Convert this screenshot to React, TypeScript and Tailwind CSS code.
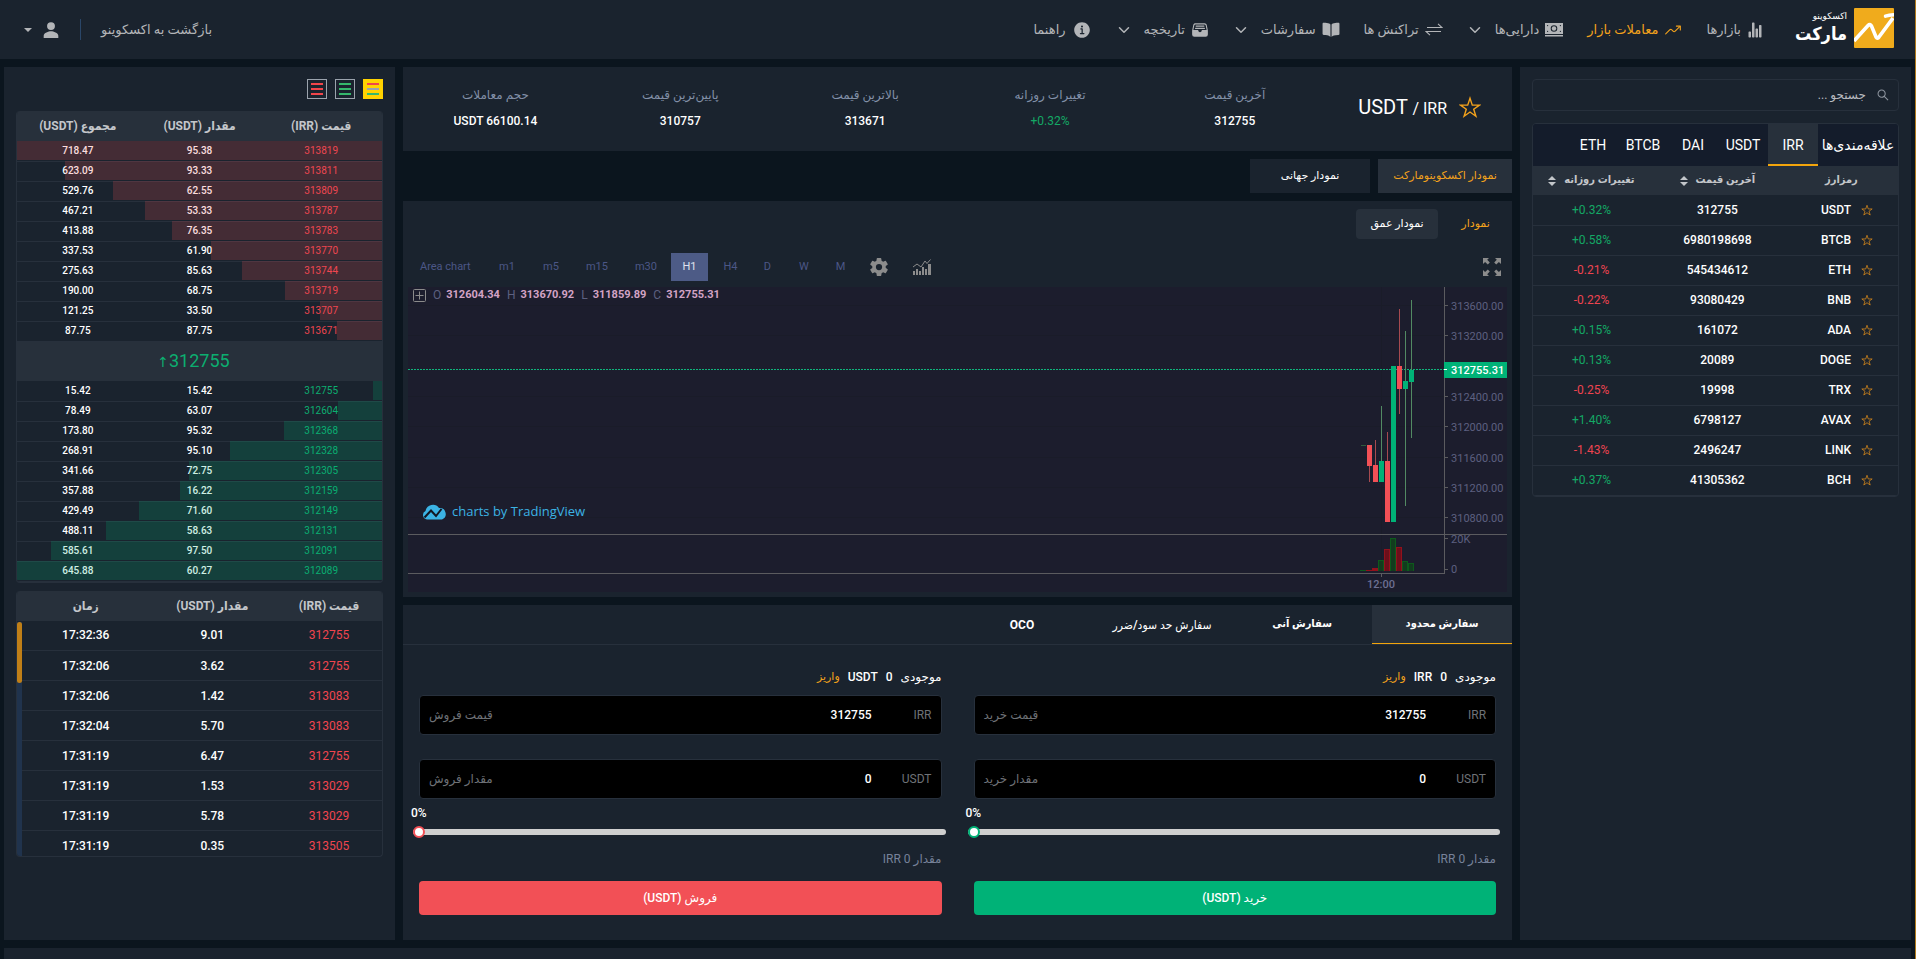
import type { ReactNode } from "react";
import clsx from "clsx";
import { AiOutlineSearch } from "react-icons/ai";
import {
    IoBook,
    IoChevronDown,
    IoFileTrayFull,
    IoInformationCircle,
    IoPersonSharp,
    IoSettingsSharp,
    IoStatsChart,
    IoTrendingUp,
} from "react-icons/io5";

function StarIcon({ className }: { className?: string }) {
    return (
        <svg viewBox="0 0 22 21" className={className} fill="none" stroke="currentColor" strokeWidth="1.4">
            <path d="M11 1.800l2.300 6.800h7.200l-5.800 4.200 2.200 6.900-5.900-4.200-5.900 4.200 2.200-6.900L1.500 8.600h7.200z" />
        </svg>
    );
}

function CashIcon() {
    return (
        <svg viewBox="0 0 18 14" className="h-3.5 w-[18px]" fill="currentColor">
            <path fillRule="evenodd" d="M0 0h18v11H0zM9 2.200a3.300 3.300 0 1 0 0 6.600 3.300 3.300 0 0 0 0-6.600zM2 2v1.500L3.500 2zM16 2v1.500L14.500 2zM2 9V7.500L3.500 9zM16 9V7.500L14.500 9z" />
            <circle cx="9" cy="5.500" r="2.200" />
            <path d="M0 12h18v1.500H0z" />
        </svg>
    );
}

function SwapIcon() {
    return (
        <svg viewBox="0 0 18 13" className="h-[13px] w-[18px]" fill="none" stroke="currentColor" strokeWidth="1.100">
            <path d="M2 4.500h15L13 .8M16 8.500H1l4 3.700" />
        </svg>
    );
}

type NavEntry = { label: string; icon: ReactNode; active?: boolean; menu?: boolean };

const navEntries: NavEntry[] = [
    { label: "بازارها", icon: <IoStatsChart className="size-4" /> },
    { label: "معاملات بازار", icon: <IoTrendingUp className="size-[18px]" />, active: true },
    { label: "دارایی‌ها", icon: <CashIcon />, menu: true },
    { label: "تراکنش ها", icon: <SwapIcon /> },
    { label: "سفارشات", icon: <IoBook className="size-[18px]" />, menu: true },
    { label: "تاریخچه", icon: <IoFileTrayFull className="size-[18px]" />, menu: true },
    { label: "راهنما", icon: <IoInformationCircle className="size-5" /> },
];

const stats = [
    { label: "آخرین قیمت", value: "312755" },
    { label: "تغییرات روزانه", value: "+0.32%", up: true },
    { label: "بالاترین قیمت", value: "313671" },
    { label: "پایین‌ترین قیمت", value: "310757" },
    { label: "حجم معاملات", value: "USDT 66100.14" },
];

const coins = [
    ["USDT", "312755", "+0.32%"],
    ["BTCB", "6980198698", "+0.58%"],
    ["ETH", "545434612", "-0.21%"],
    ["BNB", "93080429", "-0.22%"],
    ["ADA", "161072", "+0.15%"],
    ["DOGE", "20089", "+0.13%"],
    ["TRX", "19998", "-0.25%"],
    ["AVAX", "6798127", "+1.40%"],
    ["LINK", "2496247", "-1.43%"],
    ["BCH", "41305362", "+0.37%"],
];

const asks = [
    ["313819", "95.38", "718.47"],
    ["313811", "93.33", "623.09"],
    ["313809", "62.55", "529.76"],
    ["313787", "53.33", "467.21"],
    ["313783", "76.35", "413.88"],
    ["313770", "61.90", "337.53"],
    ["313744", "85.63", "275.63"],
    ["313719", "68.75", "190.00"],
    ["313707", "33.50", "121.25"],
    ["313671", "87.75", "87.75"],
];

const bids = [
    ["312755", "15.42", "15.42"],
    ["312604", "63.07", "78.49"],
    ["312368", "95.32", "173.80"],
    ["312328", "95.10", "268.91"],
    ["312305", "72.75", "341.66"],
    ["312159", "16.22", "357.88"],
    ["312149", "71.60", "429.49"],
    ["312131", "58.63", "488.11"],
    ["312091", "97.50", "585.61"],
    ["312089", "60.27", "645.88"],
];

const trades = [
    ["312755", "9.01", "17:32:36"],
    ["312755", "3.62", "17:32:06"],
    ["313083", "1.42", "17:32:06"],
    ["313083", "5.70", "17:32:04"],
    ["312755", "6.47", "17:31:19"],
    ["313029", "1.53", "17:31:19"],
    ["313029", "5.78", "17:31:19"],
    ["313505", "0.35", "17:31:19"],
];

function Logo() {
    return (
        <a href="#" className="flex items-center gap-[7px] text-white" aria-label="اکسکوینو مارکت">
            <svg viewBox="0 0 40 40" className="size-10">
                <rect width="40" height="40" rx="1" fill="#f0ab1c" />
                <path d="M0 33 L14 17.5 Q16 15.5 17.5 18 L22 29 Q23.5 31.5 25 29 L39 10" fill="none" stroke="#fff" strokeWidth="3.6" />
                <path d="M31.5 8.2 Q35 7 39.5 6.8" fill="none" stroke="#fff" strokeWidth="3.4" strokeLinecap="round" />
            </svg>
            <span className="flex flex-col">
                <span className="text-[9px] leading-3">اکسکوینو</span>
                <span className="font-['DejaVu_Sans_Condensed','DejaVu_Sans',sans-serif] text-lg leading-6 font-bold">مارکت</span>
            </span>
        </a>
    );
}

function Header() {
    return (
        <header className="flex h-[59px] items-center bg-[#1a232e] pb-1 pe-6 ps-[21px] text-[13px] text-[#b3b5b8]">
            <Logo />
            <nav className="ms-8 flex items-center gap-6 pt-1">
                {navEntries.map((entry) => (
                    <a key={entry.label} href="#" className={clsx("flex items-center", entry.active && "text-[#f3a21c]")}>
                        {entry.icon}
                        <span className="ms-1.5">{entry.label}</span>
                        {entry.menu && <IoChevronDown className="ms-3 size-4" />}
                    </a>
                ))}
            </nav>
            <a href="#" className="ms-auto pt-1">بازگشت به اکسکوینو</a>
            <span className="ms-5 mt-1 h-[21px] w-px bg-[#2a4668]" />
            <button className="ms-5 flex items-center gap-2.5 pt-1" aria-label="حساب کاربری">
                <IoPersonSharp className="size-[18px]" />
                <svg viewBox="0 0 8 4" className="h-1 w-2" fill="currentColor">
                    <path d="M0 0h8L4 4z" />
                </svg>
            </button>
        </header>
    );
}

function Sorter() {
    return (
        <svg viewBox="0 0 8 10" className="h-2.5 w-2" fill="#c3c6ca">
            <path d="M4 0l4 4H0zM4 10l4-4H0z" />
        </svg>
    );
}

function MarketsPanel() {
    return (
        <aside className="bg-[#1a232e] p-3">
            <label className="flex h-8 items-center gap-2.5 rounded border border-[#27303c] px-2">
                <AiOutlineSearch className="size-3.5 text-[#8d949e]" />
                <input
                    aria-label="جستجو"
                    placeholder="جستجو ..."
                    className="min-w-0 flex-1 bg-transparent text-xs outline-none placeholder:text-[#b9bcc1]"
                />
            </label>
            <div className="mt-3 overflow-hidden rounded border border-[#27303c]">
                <div className="flex h-[42px] bg-[#141c2b] text-sm text-white">
                    <button className="w-20 whitespace-nowrap">علاقه‌مندی‌ها</button>
                    <button className="w-[50px] border-b-2 border-[#f3a50c] bg-[#27303b] pt-0.5">IRR</button>
                    <button className="w-[50px]">USDT</button>
                    <button className="w-[50px]">DAI</button>
                    <button className="w-[50px]">BTCB</button>
                    <button className="w-[50px]">ETH</button>
                </div>
                <table className="w-full table-fixed text-center text-xs">
                    <thead>
                        <tr className="h-[29px] bg-[#27303b] font-['Roboto','DejaVu_Sans_Condensed','DejaVu_Sans',sans-serif] text-[11px] text-[#c3c6ca]">
                            <th className="w-[31%] font-bold">رمزارز</th>
                            <th className="w-[37%] font-bold">
                                <span className="flex items-center justify-center gap-2">آخرین قیمت <Sorter /></span>
                            </th>
                            <th className="w-[32%] font-bold">
                                <span className="flex items-center justify-center gap-2">تغییرات روزانه <Sorter /></span>
                            </th>
                        </tr>
                    </thead>
                    <tbody>
                        {coins.map(([symbol, price, change]) => (
                            <tr key={symbol} className="h-[30px] border-b border-[#27303c] font-medium text-white">
                                <td>
                                    <span className="flex items-center gap-2.5 ps-[25px]">
                                        <StarIcon className="size-3 text-[#d98a1c]" />
                                        {symbol}
                                    </span>
                                </td>
                                <td>{price}</td>
                                <td dir="ltr" className={clsx("font-normal", change.startsWith("+") ? "text-[#14a865]" : "text-[#ee4450]")}>{change}</td>
                            </tr>
                        ))}
                    </tbody>
                </table>
            </div>
        </aside>
    );
}

function PairSummary() {
    return (
        <section className="grid h-[84px] grid-cols-6 items-center bg-[#1a232e] text-center text-xs">
            <div className="flex items-center justify-center gap-3 pb-1 text-white">
                <StarIcon className="size-[22px] text-[#f3a21c]" />
                <h1 dir="ltr" className="text-xl">
                    USDT <span className="text-base">/ IRR</span>
                </h1>
            </div>
            {stats.map((stat) => (
                <div key={stat.label} className="flex flex-col gap-2.5 pb-0.5 leading-4">
                    <span className="font-medium text-[#8290a8]">{stat.label}</span>
                    <span dir="ltr" className={stat.up ? "text-[#14a865]" : "font-medium text-white"}>{stat.value}</span>
                </div>
            ))}
        </section>
    );
}

const priceTicks = [
    ["313600.00", 19],
    ["313200.00", 49],
    ["312400.00", 110],
    ["312000.00", 140],
    ["311600.00", 171],
    ["311200.00", 201],
    ["310800.00", 231],
] as const;

const candles = [
    { x: 959, high: 158, low: 195, top: 158, bottom: 179, up: false },
    { x: 965, high: 153, low: 195, top: 178, bottom: 195, up: false },
    { x: 971, high: 119, low: 195, top: 174, bottom: 195, up: true },
    { x: 977, high: 145, low: 235, top: 174, bottom: 235, up: false },
    { x: 983, high: 79, low: 235, top: 79, bottom: 235, up: true },
    { x: 989, high: 22, low: 127, top: 79, bottom: 102, up: false },
    { x: 995, high: 44, low: 219, top: 94, bottom: 102, up: true },
    { x: 1001, high: 13, low: 151, top: 83, bottom: 95, up: true },
];

const volumes = [
    { x: 953, h: 0, up: true },
    { x: 959, h: 0, up: false },
    { x: 965, h: 2, up: false },
    { x: 971, h: 10, up: true },
    { x: 977, h: 21, up: false },
    { x: 983, h: 32, up: true },
    { x: 989, h: 23, up: false },
    { x: 995, h: 9, up: true },
    { x: 1001, h: 7, up: true },
];

function CandleChart() {
    return (
        <svg
            viewBox="0 0 1099 305"
            preserveAspectRatio="xMaxYMin slice"
            className="h-[305px] w-full bg-[#1c1d2d] text-[11px]"
            shapeRendering="crispEdges"
        >
            {priceTicks.map(([label, y]) => (
                <g key={label}>
                    <path d={`M-900 ${y - 0.5}H1036`} stroke="#1a1c29" />
                    <path d={`M1036 ${y - 0.5}H1040`} stroke="#5b5b5f" />
                    <text x="1043" y={y + 4} fill="#5d6080">{label}</text>
                </g>
            ))}
            <path d="M973.5 0V286" stroke="#1a1c29" />
            <path d="M-900 247.5H1099M-900 286.5H1037M1036.5 0V287M973.5 287V290M1037 251.5H1040M1037 282.5H1040" stroke="#5b5b5f" />
            <path d="M-900 82.5H1036" stroke="#0fb47c" strokeDasharray="2 1" />
            <path d="M953 158.5H958" stroke="#2d5c3d" />
            {candles.map((c) => (
                <g key={c.x}>
                    <path d={`M${c.x + 2.5} ${c.high}V${c.low}`} stroke={c.up ? "#528a63" : "#a64a50"} />
                    <rect x={c.x} y={c.top} width="5" height={c.bottom - c.top} fill={c.up ? "#00b277" : "#f25056"} />
                </g>
            ))}
            {volumes.map((v) => (
                <g key={v.x} fill={v.up ? "#0d5a1c" : "#92111c"}>
                    <rect x={v.x - 1} y={283 - v.h} width="6" height={v.h + 1} />
                    {v.h > 2 && <rect x={v.x} y={284 - v.h} width="4" height={v.h} fill={v.up ? "#123c1e" : "#6d0f1b"} />}
                </g>
            ))}
            <rect x="1036" y="75" width="63" height="16" fill="#00b277" />
            <path d="M1036 82.5H1039" stroke="#fff" />
            <text x="1043" y="87" fill="#fff" fontWeight="500">312755.31</text>
            <text x="1043" y="256" fill="#5d6080">20K</text>
            <text x="1043" y="286" fill="#5d6080">0</text>
            <text x="973" y="301" fill="#6d7093" textAnchor="middle" fontWeight="500">12:00</text>
        </svg>
    );
}

const ohlc = [
    ["O", "312604.34"],
    ["H", "313670.92"],
    ["L", "311859.89"],
    ["C", "312755.31"],
];

function ChartPanel() {
    return (
        <section className="flex flex-col bg-[#1a232e] px-[5px] pb-[5px] pt-2">
            <div className="flex text-[11px] font-medium text-white">
                <button className="me-1.5 w-[63px] text-[#f3a21c]">نمودار</button>
                <button className="h-[30px] w-[82px] rounded bg-[#27303b]">نمودار عمق</button>
            </div>
            <div dir="ltr" className="flex h-12 items-center pb-1.5 pl-3 pr-1.5 pt-3.5 text-[11px] text-[#4c5787]">
                <button className="w-[52px] whitespace-nowrap text-left">Area chart</button>
                <button className="ml-[13px] w-11">m1</button>
                <button className="w-11">m5</button>
                <button className="w-12">m15</button>
                <button className="w-[50px]">m30</button>
                <button className="h-7 w-[37px] bg-[#4d5b86] text-[#dfe2ee]">H1</button>
                <button className="w-[45px]">H4</button>
                <button className="w-[29px]">D</button>
                <button className="w-11">W</button>
                <button className="w-[29px]">M</button>
                <button className="ml-3.5 text-[#8c8c8c]" aria-label="Settings"><IoSettingsSharp className="size-5" /></button>
                <button className="ml-6 text-[#8c8c8c]" aria-label="Indicators">
                    <svg viewBox="0 0 18 16" className="h-4 w-[18px]" fill="currentColor">
                        <path d="M0 12h2v4H0zM3 10h2v6H3zM6 12h2v4H6zM9 8h2v8H9zM12 10h2v6h-2zM15 5h3v11h-3z" />
                        <path d="M0 8l4-3 4 3 4-6 2 2.500 3.500-4" fill="none" stroke="currentColor" />
                    </svg>
                </button>
                <button className="ml-auto text-[#8c8c8c]" aria-label="Fullscreen">
                    <svg viewBox="0 0 18 18" className="size-[18px]" fill="currentColor">
                        <path d="M0 0h6L4.200 1.800 6.800 4.400 4.800 6.500 2.100 3.900 0 6zM18 0v6l-2.100-2.100-2.700 2.600-2-2.100 2.600-2.600L12 0zM0 18v-6l2.100 2.100 2.700-2.600 2 2.100-2.600 2.600L6 18zM18 18h-6l1.800-1.800-2.600-2.600 2-2.100 2.700 2.600L18 12z" />
                    </svg>
                </button>
            </div>
            <div dir="ltr" className="relative">
                <CandleChart />
                <div className="absolute left-[5px] top-0 flex h-4 items-center gap-[7px] text-xs text-[#5d6080]">
                    <svg viewBox="0 0 13 13" className="size-[13px]" fill="none" stroke="#8b8b8b">
                        <rect x=".5" y=".5" width="12" height="12" rx="1" />
                        <path d="M6.500 2.500v8M2.500 6.500h8" />
                    </svg>
                    {ohlc.map(([key, value]) => (
                        <span key={key} className="flex items-center gap-[5px]">
                            {key} <b className="text-[11px] font-bold text-[#d3a3c5]">{value}</b>
                        </span>
                    ))}
                </div>
                <a href="#" className="absolute left-3.5 top-[215px] flex items-center gap-1.5 font-['Open_Sans',sans-serif] text-[13px] text-[#3bb3e4]">
                    <svg viewBox="0 0 24 16" className="h-4 w-6">
                        <path d="M5 15.500a4.500 4.500 0 0 1-1.500-8.500A7.500 7.500 0 0 1 17 4a6 6 0 0 1 3 11.500z" fill="#3bb3e4" />
                        <path d="M2.500 13.500L9 6.500l5 5.500 5.500-7" fill="none" stroke="#131722" strokeWidth="2" />
                    </svg>
                    charts by TradingView
                </a>
            </div>
        </section>
    );
}

type OrderFormProps = { side: "buy" | "sell"; verb: string; currency: string };

function OrderForm({ side, verb, currency }: OrderFormProps) {
    const buying = side === "buy";
    const fields = [
        { id: `${side}-price`, unit: "IRR", label: `قیمت ${verb}`, value: "312755" },
        { id: `${side}-amount`, unit: "USDT", label: `مقدار ${verb}`, value: "0" },
    ];
    return (
        <form className="px-4 pb-[25px] pt-6 text-xs font-medium text-white">
            <div className="flex h-4 items-center gap-2">
                <span>موجودی</span>
                <span>0</span>
                <span>{currency}</span>
                <a href="#" className="text-[11px] text-[#f3a21c]">واریز</a>
            </div>
            <div className="mt-2.5 flex flex-col gap-6">
                {fields.map((field) => (
                    <div key={field.id} className="flex h-10 items-center rounded border border-[#27303c] bg-black px-[9px] font-normal text-[#6f7277]">
                        <span className="w-[60px]">{field.unit}</span>
                        <input id={field.id} defaultValue={field.value} className="min-w-0 flex-1 bg-transparent font-medium text-white outline-none" />
                        <label htmlFor={field.id}>{field.label}</label>
                    </div>
                ))}
            </div>
            <div dir="ltr" className="-ml-2 -mr-0.5 mt-1.5">
                <label htmlFor={`${side}-percent`} className="block h-4 leading-4">0%</label>
                <input
                    id={`${side}-percent`}
                    type="range"
                    defaultValue={0}
                    className={clsx(
                        "ml-0.5 mt-2 block h-1.5 w-full appearance-none rounded-full bg-[#cfcfcf] [&::-webkit-slider-thumb]:size-3 [&::-webkit-slider-thumb]:appearance-none [&::-webkit-slider-thumb]:rounded-full [&::-webkit-slider-thumb]:border-2 [&::-webkit-slider-thumb]:bg-white",
                        buying ? "[&::-webkit-slider-thumb]:border-[#00b277]" : "[&::-webkit-slider-thumb]:border-[#f25056]",
                    )}
                />
            </div>
            <p className="mt-4 h-4 leading-4 font-normal text-[#77829a]">مقدار 0 IRR</p>
            <button type="button" className={clsx("mt-3.5 h-[34px] w-full rounded", buying ? "bg-[#00b277]" : "bg-[#f25056]")}>
                {verb} (USDT)
            </button>
        </form>
    );
}

function OrderPanel() {
    return (
        <section className="flex-1 bg-[#1a232e]">
            <div className="flex h-10 border-b border-[#27303c] font-['Roboto','DejaVu_Sans_Condensed','DejaVu_Sans',sans-serif] text-[11px] font-bold text-white">
                <button className="w-[140px] border-b border-[#f3a50c] bg-[#27303b]">سفارش محدود</button>
                <button className="w-[140px]">سفارش آنی</button>
                <button className="w-[140px] text-xs font-medium">سفارش حد سود/ضرر</button>
                <button className="w-[140px] text-xs">OCO</button>
            </div>
            <div className="grid grid-cols-2">
                <OrderForm side="buy" verb="خرید" currency="IRR" />
                <OrderForm side="sell" verb="فروش" currency="USDT" />
            </div>
        </section>
    );
}

function BookRows({ rows, side }: { rows: string[][]; side: "ask" | "bid" }) {
    const max = Math.max(...rows.map((row) => Number(row[2])));
    return (
        <tbody>
            {rows.map(([price, amount, total]) => (
                <tr key={price} className="relative h-5 border-b border-[#27303c] text-white">
                    <td className={clsx("font-normal", side === "ask" ? "text-[#f0454f]" : "text-[#0cae70]")}>
                        {price}
                        <span
                            className={clsx("absolute inset-y-0 right-0", side === "ask" ? "bg-[#f05056]/20" : "bg-[#00b377]/20")}
                            style={{ width: `${(Number(total) / max) * 100}%` }}
                        />
                    </td>
                    <td>{amount}</td>
                    <td>{total}</td>
                </tr>
            ))}
        </tbody>
    );
}

function DepthToggle({ label, lines, active }: { label: string; lines: string[]; active?: boolean }) {
    return (
        <button
            aria-label={label}
            className={clsx("flex size-5 flex-col items-center justify-center gap-[3px]", active ? "bg-[#ffd200]" : "border border-[#9ba3ad]")}
        >
            {lines.map((line, i) => (
                <span key={i} className={clsx("h-0.5 w-3", line)} />
            ))}
        </button>
    );
}

function OrderBookPanel() {
    return (
        <aside className="bg-[#1a232e] p-3">
            <div className="flex gap-2">
                <DepthToggle label="همه" active lines={["bg-[#f0454a]", "bg-[#9ba3ad]", "bg-[#35b76c]"]} />
                <DepthToggle label="خرید" lines={["bg-[#35b76c]", "bg-[#35b76c]", "bg-[#35b76c]"]} />
                <DepthToggle label="فروش" lines={["bg-[#f0454a]", "bg-[#f0454a]", "bg-[#f0454a]"]} />
            </div>
            <div className="mt-3 overflow-hidden rounded border border-t-0 border-[#27303c]">
                <table className="w-full table-fixed text-center text-[10px] leading-4 font-medium">
                    <thead>
                        <tr className="h-[30px] bg-[#27303b] font-['Roboto','DejaVu_Sans_Condensed','DejaVu_Sans',sans-serif] text-xs text-[#c3c6ca]">
                            <th>قیمت (IRR)</th>
                            <th>مقدار (USDT)</th>
                            <th>مجموع (USDT)</th>
                        </tr>
                    </thead>
                    <BookRows rows={asks} side="ask" />
                    <tbody>
                        <tr className="h-10 bg-[#27303b] text-lg font-normal text-[#0cae70]">
                            <td colSpan={3} className="pr-3">312755<span className="text-sm">↑</span></td>
                        </tr>
                    </tbody>
                    <BookRows rows={bids} side="bid" />
                </table>
            </div>
            <div className="relative mt-2 h-[266px] overflow-hidden rounded border border-t-0 border-[#27303c]">
                <table className="w-full table-fixed text-center text-xs font-medium">
                    <thead>
                        <tr className="h-[30px] bg-[#27303b] font-['Roboto','DejaVu_Sans_Condensed','DejaVu_Sans',sans-serif] text-xs text-[#c3c6ca]">
                            <th className="w-[29%]">قیمت (IRR)</th>
                            <th className="w-[35%]">مقدار (USDT)</th>
                            <th className="w-[36%] pl-1.5">زمان</th>
                        </tr>
                    </thead>
                    <tbody>
                        {trades.map(([price, amount, time], i) => (
                            <tr key={i} className="h-[30px] border-b border-[#27303c] text-white">
                                <td className="font-normal text-[#f0454f]">{price}</td>
                                <td>{amount}</td>
                                <td className="pl-1.5">{time}</td>
                            </tr>
                        ))}
                    </tbody>
                </table>
                <div className="absolute bottom-0 left-0 top-[31px] w-[5px] bg-[#20334d]">
                    <div className="h-[61px] rounded-sm bg-[#c07f17]" />
                </div>
            </div>
        </aside>
    );
}

export default function App() {
    return (
        <div
            dir="rtl"
            className="flex min-h-screen flex-col border-r border-[#b07a1c] bg-[#0b151e] font-['Roboto','DejaVu_Sans',sans-serif]"
        >
            <Header />
            <main className="mt-2 grid grid-cols-[5fr_14fr_5fr] *:mx-1">
                <MarketsPanel />
                <div className="flex min-w-0 flex-col gap-2">
                    <PairSummary />
                    <div className="flex h-[34px] gap-2 text-[11px] font-medium text-white">
                        <button className="w-[134px] bg-[#27303b] text-[#f3a21c]">نمودار اکسکوینومارکت</button>
                        <button className="w-[120px] bg-[#1a232e]">نمودار جهانی</button>
                    </div>
                    <ChartPanel />
                    <OrderPanel />
                </div>
                <OrderBookPanel />
            </main>
            <footer className="mx-1 mt-2 flex-1 bg-[#1a232e]" />
        </div>
    );
}
